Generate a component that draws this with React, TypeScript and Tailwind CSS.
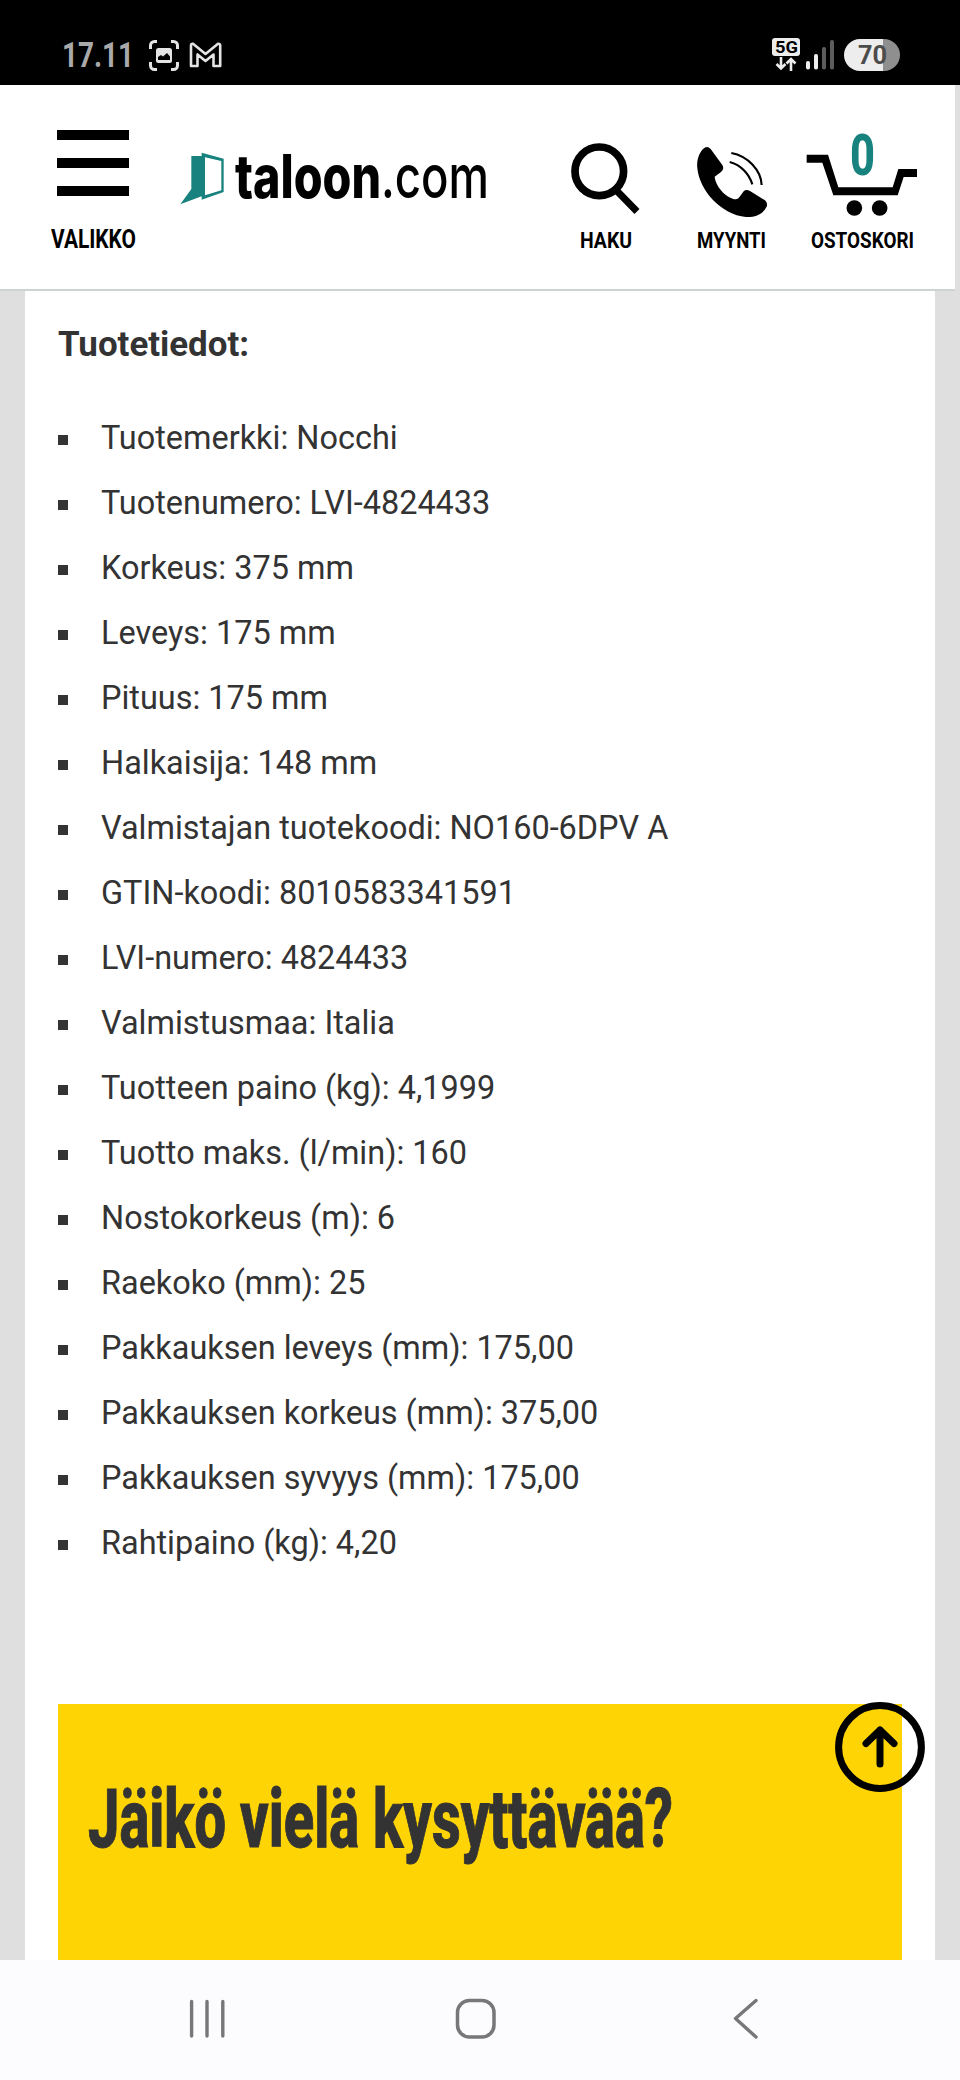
import { useLayoutEffect, useRef } from "react";
import type { ReactNode } from "react";

/** Single-line text condensed or widened to an exact width. */
function FitText({ width, className = "", children }: { width: number; className?: string; children: ReactNode }) {
  const ref = useRef<HTMLSpanElement>(null);
  useLayoutEffect(() => {
    const el = ref.current;
    if (!el) return;
    el.style.transform = "none";
    el.style.transform = `scaleX(${width / el.getBoundingClientRect().width})`;
  }, [width]);
  return (
    <span className={`block ${className}`} style={{ width }}>
      <span ref={ref} className="inline-block origin-left align-top whitespace-nowrap">
        {children}
      </span>
    </span>
  );
}

const specs = [
  "Tuotemerkki: Nocchi",
  "Tuotenumero: LVI-4824433",
  "Korkeus: 375 mm",
  "Leveys: 175 mm",
  "Pituus: 175 mm",
  "Halkaisija: 148 mm",
  "Valmistajan tuotekoodi: NO160-6DPV A",
  "GTIN-koodi: 8010583341591",
  "LVI-numero: 4824433",
  "Valmistusmaa: Italia",
  "Tuotteen paino (kg): 4,1999",
  "Tuotto maks. (l/min): 160",
  "Nostokorkeus (m): 6",
  "Raekoko (mm): 25",
  "Pakkauksen leveys (mm): 175,00",
  "Pakkauksen korkeus (mm): 375,00",
  "Pakkauksen syvyys (mm): 175,00",
  "Rahtipaino (kg): 4,20",
];

function StatusBar() {
  return (
    <div className="flex h-[85px] items-start bg-black pl-[62px] pr-[60px]">
      <FitText width={72} className="mt-9 h-10 text-[35px] font-bold leading-10 text-[#a9a9a9]">
        17.11
      </FitText>
      <svg className="ml-[14px] mt-[39px]" width="32" height="33" viewBox="0 0 32 33" fill="none">
        <path
          d="M2.5 10V6.5a4 4 0 0 1 4-4H9M23 2.5h2.5a4 4 0 0 1 4 4V10M29.5 23v3.500a4 4 0 0 1-4 4H23M9 30.500H6.500a4 4 0 0 1-4-4V23"
          stroke="#e4e4e4"
          strokeWidth="3"
        />
        <rect x="8" y="9" width="16" height="15" rx="2.500" fill="#e4e4e4" />
        <path d="M10 21v-3l3-2 2 1.500 4-3.500 3 3.500V21z" fill="#000" />
      </svg>
      <svg className="ml-[9px] mt-[42px]" width="33" height="26" viewBox="0 0 33 26" fill="none">
        <path
          d="M2 3.500Q2 1.500 4 1.800L16.500 12 29 1.800Q31 1.500 31.200 3.500V24H24.500V12.500L16.500 19 8.500 12.500V24H2Z"
          stroke="#e4e4e4"
          strokeWidth="2.600"
          strokeLinejoin="round"
        />
      </svg>
      <div className="ml-auto mt-[38px] flex w-7 flex-col items-center">
        <div className="flex h-[18px] w-7 justify-center rounded-[3px] bg-[#ededed]">
          <FitText width={23} className="text-[17px] font-bold leading-[18px] text-black">
            5G
          </FitText>
        </div>
        <svg className="mt-px" width="22" height="14" viewBox="0 0 22 14" fill="none" stroke="#ededed" strokeWidth="2.600">
          <path d="M6 0v11M1.500 7 6 11.500 10.500 7M16 14V2M11.500 6.500 16 2l4.500 4.500" />
        </svg>
      </div>
      <svg className="ml-[6px] mt-[39px]" width="28" height="31" viewBox="0 0 28 31">
        <rect x="0" y="22" width="4" height="8.500" rx="1.800" fill="#ededed" />
        <rect x="8" y="15" width="4" height="15.500" rx="1.800" fill="#ededed" />
        <rect x="16" y="8" width="4" height="22.500" rx="1.800" fill="#5c5c5c" />
        <rect x="24" y="1" width="4" height="29.500" rx="1.800" fill="#5c5c5c" />
      </svg>
      <div className="ml-[10px] mt-[39px] flex h-8 w-14 justify-center rounded-full bg-linear-to-r from-[#ededed] from-70% to-[#8f8f8f] to-70%">
        <FitText width={29} className="text-[25px] font-bold leading-[33px] text-[#4c4c4c]">
          70
        </FitText>
      </div>
    </div>
  );
}

function Header() {
  return (
    <header className="flex h-[206px] w-[955px] items-start border-b-2 border-[#ccd4d4] bg-white text-black">
      <div className="ml-[50px] flex w-[86px] flex-col items-center">
        <div className="-ml-px mt-[45px] flex w-[72px] flex-col gap-[18px]">
          <div className="h-[10px] bg-black" />
          <div className="h-[10px] bg-black" />
          <div className="h-[10px] bg-black" />
        </div>
        <FitText width={85} className="mt-[29px] h-[30px] text-[25px] font-bold leading-[30px]">
          VALIKKO
        </FitText>
      </div>

      <div className="ml-[44px] flex items-start">
        <svg className="mt-[67px]" width="44" height="54" viewBox="61 102 132 162">
          <path
            fill="#17827e"
            fillRule="evenodd"
            d="M95 114h31V104l66 18v100l-66 23v-10L62 259 95 213zM136 118v114l49-15v-88z"
          />
        </svg>
        <div className="ml-[11px] mt-[61px] flex text-[60px] leading-[60px] [font-family:'Inter',sans-serif]">
          <FitText width={146} className="font-extrabold">
            taloon
          </FitText>
          <FitText width={108} className="font-medium">
            .com
          </FitText>
        </div>
      </div>

      <div className="ml-[79px] flex w-[76px] flex-col items-center">
        <svg className="-ml-px mt-[57px]" width="76" height="76" viewBox="0 0 76 76" fill="none" stroke="#000">
          <circle cx="31.300" cy="29.300" r="24.300" strokeWidth="7.700" />
          <path d="M48 48 69 69.500" strokeWidth="7" />
        </svg>
        <FitText width={52} className="mt-[10px] h-[26px] text-[21.800px] font-bold leading-[26px]">
          HAKU
        </FitText>
      </div>

      <div className="ml-[49px] flex w-[76px] flex-col items-center">
        <svg className="mt-[57px]" width="76" height="76" viewBox="461 96 228 228" fill="none" stroke="#000">
          <path
            d="M495 114Q505 107 514 117L549 165Q556 177 545 186L526 200C530 235 565 266 590 268Q597 266 601 260L613 244Q620 237 632 243L677 271Q687 280 681 292C670 312 650 322 620 321C545 315 480 240 474 175C471 150 480 125 495 114Z"
            fill="#000"
            stroke="none"
          />
          <path d="M576 129C625 138 665 180 667 225M571 156C605 165 630 192 639 223" strokeWidth="6.500" />
        </svg>
        <FitText width={69} className="mt-[10px] h-[26px] text-[21.800px] font-bold leading-[26px]">
          MYYNTI
        </FitText>
      </div>

      <div className="relative ml-[37px] flex w-[112px] flex-col items-center">
        <svg className="mt-[57px]" width="112" height="76" viewBox="139 96 336 228">
          <path d="M141 134H205L236 232H399L416 177H472V201H432L414 256H221L188 158H141Z" />
          <circle cx="284" cy="294" r="23.500" />
          <circle cx="360" cy="294" r="23.500" />
        </svg>
        <FitText width={103} className="mt-[10px] h-[26px] text-[21.800px] font-bold leading-[26px]">
          OSTOSKORI
        </FitText>
        <div className="absolute left-[44px] top-[42px]">
          <FitText width={25} className="text-[57px] font-extrabold leading-[58px] text-[#17827e]">
            0
          </FitText>
        </div>
      </div>
    </header>
  );
}

function NavBar() {
  return (
    <nav className="flex h-[120px] items-start bg-[#fcfcfe] pl-[187px] pt-[37px]">
      <svg width="40" height="42" viewBox="0 0 40 42" stroke="#77777a" strokeWidth="3.400" strokeLinecap="round">
        <path d="M4.600 4.500V39M20 4.500V39M35.800 4.500V39" />
      </svg>
      <svg className="ml-[227px]" width="44" height="44" viewBox="0 0 44 44" fill="none" stroke="#77777a" strokeWidth="3.500">
        <rect x="3.500" y="3.500" width="36.500" height="36.500" rx="12" />
      </svg>
      <svg
        className="ml-[234px]"
        width="28"
        height="44"
        viewBox="0 0 28 44"
        fill="none"
        stroke="#77777a"
        strokeWidth="3.400"
        strokeLinecap="round"
        strokeLinejoin="round"
      >
        <path d="M24 3.500 3.500 21.500 24 40" />
      </svg>
    </nav>
  );
}

export default function App() {
  return (
    <div className="relative flex h-[2080px] w-[960px] flex-col overflow-hidden bg-[#dfdfdf] font-[Roboto,sans-serif]">
      <StatusBar />
      <Header />
      <main className="ml-[25px] flex h-[1669px] w-[910px] flex-col bg-white pl-[33px] pt-[34px] text-[#333333]">
        <h2 className="text-[34.900px] font-bold leading-10">Tuotetiedot:</h2>
        <ul className="mt-[41px]">
          {specs.map((s) => (
            <li key={s} className="flex h-[65px] items-center gap-[33px]">
              <span className="mt-[2px] size-[10px] bg-[#333333]" />
              <span className="text-[32.450px] leading-[65px]">{s}</span>
            </li>
          ))}
        </ul>
        <section className="mt-[128px] h-[256px] w-[844px] bg-[#ffd404] pl-[30px] pt-[68px]">
          <h1>
            <FitText
              width={585}
              className="text-[81px] font-extrabold leading-[96px] [-webkit-text-stroke:1px_#333333]"
            >
              Jäikö vielä kysyttävää?
            </FitText>
          </h1>
        </section>
      </main>
      <NavBar />
      <button className="absolute left-[835px] top-[1702px] size-[90px]" aria-label="Takaisin ylös">
        <svg width="90" height="90" viewBox="0 0 90 90" fill="none" stroke="#000" strokeWidth="7" strokeLinecap="round" strokeLinejoin="round">
          <circle cx="45" cy="45" r="41.400" />
          <path d="M45 62V28M31 41.500 45 28 59 41.500" />
        </svg>
      </button>
    </div>
  );
}
